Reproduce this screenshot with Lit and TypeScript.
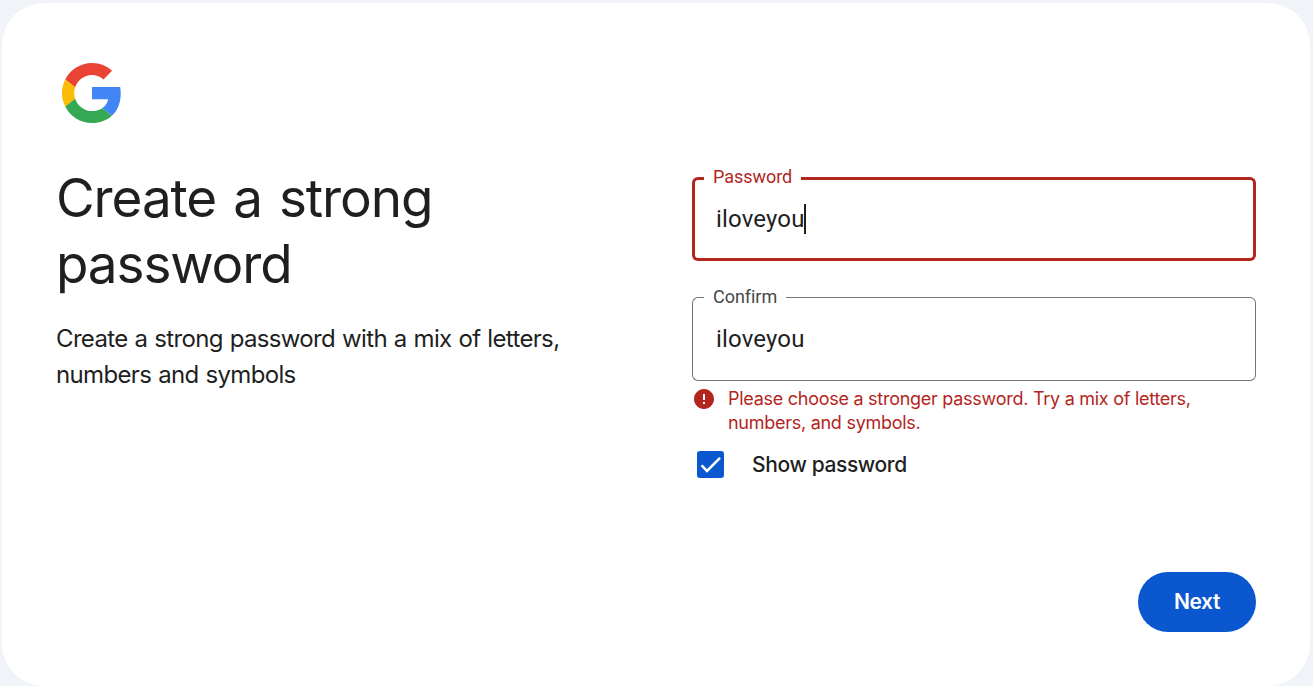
import { LitElement, html, css, svg } from "lit";
import { customElement, property } from "lit/decorators.js";
import { classMap } from "lit/directives/class-map.js";

const googleLogo = html`<svg class="logo" viewBox="0 0 48 48" aria-label="Google">
  <path fill="#EA4335" d="M24 9.5c3.54 0 6.71 1.22 9.21 3.6l6.85-6.85C35.9 2.38 30.47 0 24 0 14.62 0 6.51 5.38 2.56 13.22l7.98 6.19C12.43 13.72 17.74 9.5 24 9.5z"/>
  <path fill="#4285F4" d="M46.98 24.55c0-1.93-.17-3.75-.45-5.35H24v9.82h12.94c-.58 2.96-2.26 5.48-4.78 7.18l7.73 6c4.51-4.18 7.09-10.36 7.09-17.65z"/>
  <path fill="#FBBC05" d="M10.53 28.59c-.48-1.45-.76-2.99-.76-4.59s.27-3.14.76-4.59l-7.98-6.19C.92 16.46 0 20.12 0 24c0 3.88.92 7.54 2.56 10.78l7.97-6.19z"/>
  <path fill="#34A853" d="M24 48c6.48 0 11.93-2.13 15.89-5.81l-7.73-6c-2.15 1.45-4.92 2.3-8.16 2.3-6.26 0-11.57-4.22-13.47-9.91l-7.98 6.19C6.51 42.62 14.62 48 24 48z"/>
</svg>`;

@customElement("outlined-field")
export class OutlinedField extends LitElement {
  @property() label = "";
  @property() value = "";
  @property({ type: Boolean }) active = false;

  static styles = css`
    :host { display: block; font-family: Roboto, "Liberation Sans", sans-serif; }
    .field { display: grid; height: 84px; --line: #747775; --w: 1px; --ink: #444746; }
    .field.active { --line: #b3261e; --w: 3px; --ink: #b3261e; }
    .outline, .content { grid-area: 1 / 1; }
    .outline { display: flex; }
    .lead, .notch, .trail { box-sizing: border-box; border: 0 solid var(--line); border-bottom-width: var(--w); }
    .lead { width: 12px; border-left-width: var(--w); border-top-width: var(--w); border-radius: 6px 0 0 6px; }
    .trail { flex: 1; border-right-width: var(--w); border-top-width: var(--w); border-radius: 0 6px 6px 0; }
    .notch { padding: 0 9px; color: var(--ink); font-size: 18px; line-height: 20px; letter-spacing: -0.04px; }
    .label { display: block; margin-top: -10px; }
    .content { display: flex; align-items: center; padding: 0 24px; font-size: 24px; line-height: 30px; color: #1f1f1f; letter-spacing: 0.15px; }
    .caret { width: 2px; height: 30px; margin-left: -1px; background: #1f1f1f; }
  `;

  render() {
    return html`<div class=${classMap({ field: true, active: this.active })}>
      <div class="outline">
        <div class="lead"></div>
        <div class="notch"><span class="label">${this.label}</span></div>
        <div class="trail"></div>
      </div>
      <div class="content"><span>${this.value}</span>${this.active ? html`<i class="caret"></i>` : ""}</div>
    </div>`;
  }
}

@customElement("app-root")
export class AppRoot extends LitElement {
  static styles = css`
    :host { display: block; height: 686px; box-sizing: border-box; padding: 3px 3px 0 2px; overflow: hidden; background: #f0f4f9; color: #1f1f1f; font-family: Inter, "Open Sans", sans-serif; }
    .card { box-sizing: border-box; height: 683px; display: grid; grid-template-columns: 582px 564px; justify-content: space-between; padding: 60px 54px 54px; border-radius: 42px; background: #fff; }
    .intro { white-space: nowrap; }
    .logo { display: block; width: 60px; height: 60px; margin-left: 6px; }
    h1 { margin: 42px 0 0; font-size: 53px; line-height: 66px; font-weight: 400; letter-spacing: -1.1px; word-spacing: 3.3px; }
    .lede { margin: 24px 0 0; font-size: 24px; line-height: 36px; font-weight: 400; letter-spacing: -0.65px; word-spacing: 0.8px; }
    .form { display: flex; flex-direction: column; padding-top: 114px; }
    .fields { display: grid; gap: 36px; }
    .error { display: flex; gap: 12px; margin-top: 6px; color: #b3261e; font-size: 18px; line-height: 24px; white-space: nowrap; letter-spacing: -0.27px; }
    .error svg { width: 24px; height: 24px; fill: #b3261e; }
    .show { display: flex; align-items: center; gap: 28px; margin: 16px 0 0 5px; height: 27px; font-size: 21px; font-weight: 500; letter-spacing: -0.38px; white-space: nowrap; }
    .box { width: 27px; height: 27px; border-radius: 3px; background: #0b57d0; }
    .box svg { display: block; fill: none; stroke: #fff; stroke-width: 2.6; }
    .next { align-self: flex-end; width: 118px; height: 60px; margin-top: 94px; border: 0; padding: 0; border-radius: 30px; background: #0b57d0; color: #fff; font: 600 21px/60px Inter, sans-serif; letter-spacing: -0.4px; }
  `;

  render() {
    return html`<main class="card">
      <section class="intro">
        ${googleLogo}
        <h1>Create a strong<br>password</h1>
        <p class="lede">Create a strong password with a mix of letters,<br>numbers and symbols</p>
      </section>
      <section class="form">
        <div class="fields">
          <outlined-field label="Password" value="iloveyou" active></outlined-field>
          <outlined-field label="Confirm" value="iloveyou"></outlined-field>
        </div>
        <div class="error">
          <svg viewBox="0 0 24 24"><path d="M12 2C6.48 2 2 6.48 2 12s4.48 10 10 10 10-4.48 10-10S17.52 2 12 2zm1 15h-2v-2h2v2zm0-4h-2V7h2v6z"/></svg>
          <span>Please choose a stronger password. Try a mix of letters,<br>numbers, and symbols.</span>
        </div>
        <label class="show">
          <span class="box"><svg width="27" height="27" viewBox="0 0 27 27">${svg`<path d="M4.6 14.4 10 19.8 23 6.8"/>`}</svg></span>
          <span class="show-text">Show password</span>
        </label>
        <button class="next">Next</button>
      </section>
    </main>`;
  }
}
